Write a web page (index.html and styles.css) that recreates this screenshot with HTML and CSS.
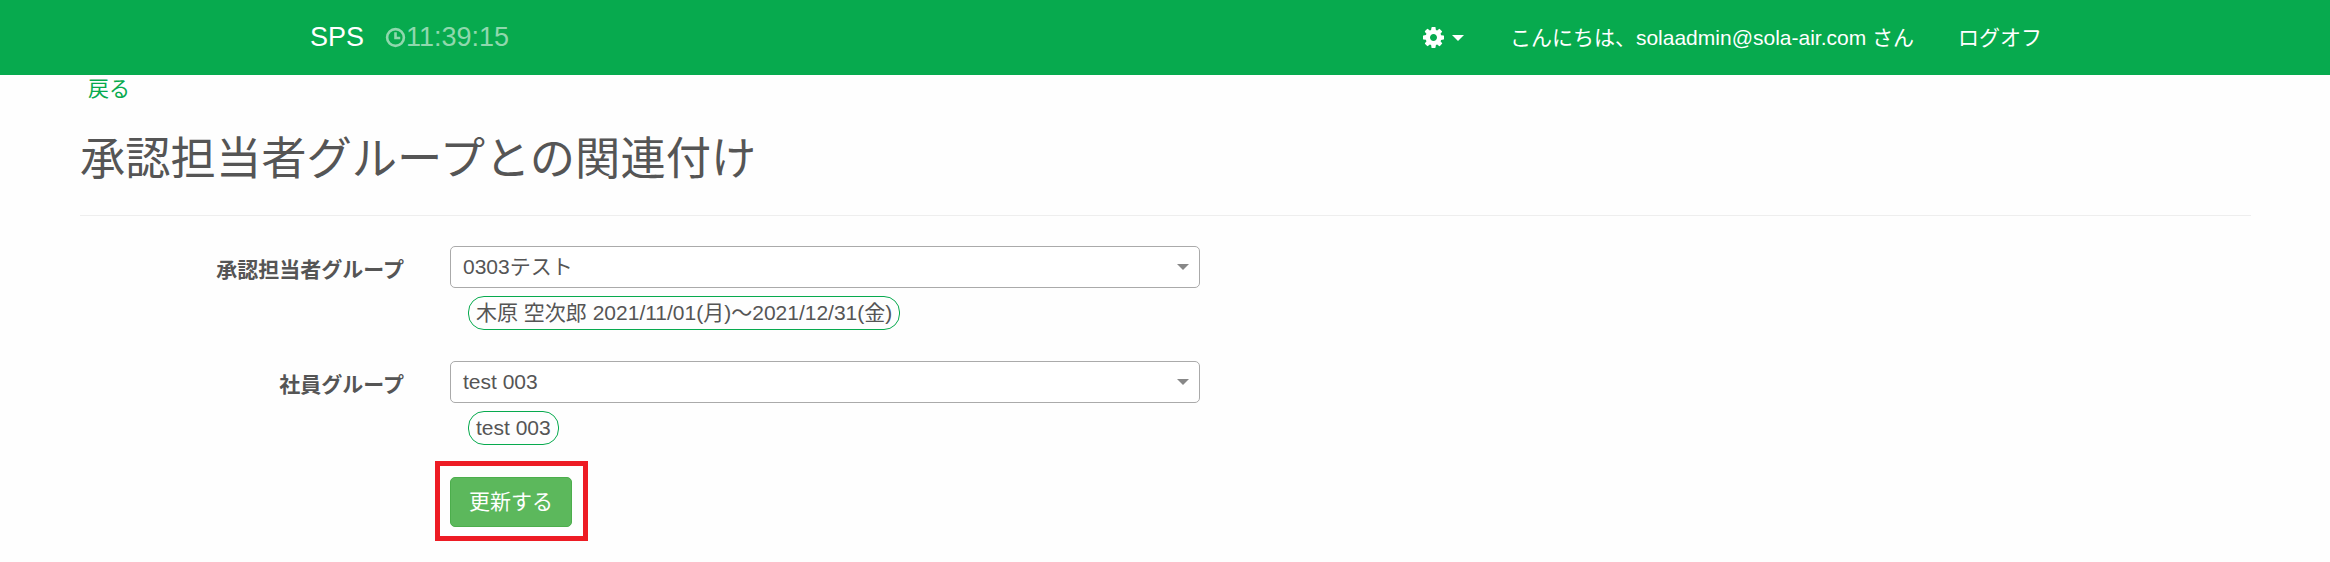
FILE: index.html
```html
<!DOCTYPE html>
<html lang="ja">
<head>
    <meta charset="UTF-8">
    <title>承認担当者グループとの関連付け</title>
    <link rel="stylesheet" href="styles.css">
</head>
<body>

    <!-- ナビゲーション -->
    <nav class="navbar">
        <a class="brand" href="#">SPS</a>
        <span class="clock">
            <svg class="clock-icon" viewBox="0 0 16 16">
                <circle cx="8" cy="8" r="6.4"></circle>
                <path d="M8 4v4.4h3.6"></path>
            </svg>11:39:15
        </span>
        <div class="nav-right">
            <a class="nav-item settings" href="#">
                <svg class="gear" viewBox="128 128 1536 1536">
                    <path d="M1152 896q0-106-75-181t-181-75-181 75-75 181 75 181 181 75 181-75 75-181zm512-109v222q0 12-8 23t-20 13l-185 28q-19 54-39 91 35 50 107 138 10 12 10 25t-9 23q-27 37-99 108t-94 71q-12 0-26-9l-138-108q-44 23-91 38-16 136-29 186-7 28-36 28h-222q-14 0-24.5-8.5t-11.5-21.5l-28-184q-49-16-90-37l-141 107q-10 9-25 9-14 0-25-11-126-114-165-168-7-10-7-23 0-12 8-23 15-21 51-66.5t54-70.5q-27-50-41-99l-183-27q-13-2-21-12.5t-8-23.5v-222q0-12 8-23t19-13l186-28q14-46 39-92-40-57-107-138-10-12-10-24 0-10 9-23 26-36 98.5-107.5t94.5-71.5q13 0 26 10l138 107q44-23 91-38 16-136 29-186 7-28 36-28h222q14 0 24.5 8.5t11.5 21.5l28 184q49 16 90 37l142-107q9-9 24-9 13 0 25 10 129 119 165 170 7 8 7 22 0 12-8 23-15 21-51 66.5t-54 70.5q26 50 41 98l183 28q13 2 21 12.5t8 23.5z"></path>
                </svg>
                <span class="caret"></span>
            </a>
            <a class="nav-item" href="#">こんにちは、solaadmin@sola-air.com さん</a>
            <a class="nav-item" href="#">ログオフ</a>
        </div>
    </nav>

    <!-- 本文 -->
    <main class="content">
        <a class="back-link" href="#">戻る</a>
        <h1>承認担当者グループとの関連付け</h1>
        <hr>

        <div class="form-row">
            <label class="form-label">承認担当者グループ</label>
            <div class="form-field">
                <div class="select-box">0303テスト<span class="select-arrow"></span></div>
                <div class="pill-row"><span class="pill">木原 空次郎 2021/11/01(月)～2021/12/31(金)</span></div>
            </div>
        </div>

        <div class="form-row">
            <label class="form-label">社員グループ</label>
            <div class="form-field">
                <div class="select-box">test 003<span class="select-arrow"></span></div>
                <div class="pill-row"><span class="pill">test 003</span></div>
            </div>
        </div>

        <div class="form-row">
            <div class="form-label"></div>
            <div class="form-field">
                <span class="button-wrap">
                    <button class="btn-update">更新する</button>
                    <span class="highlight-frame"></span>
                </span>
            </div>
        </div>
    </main>

</body>
</html>
```

FILE: styles.css
```css
body {
    margin: 0;
    min-height: 100vh;
    font-family: "Liberation Sans", "Noto Sans CJK JP", sans-serif;
    font-size: 21px;
    line-height: 25px;
    color: #555;
    background-color: #fefefe;
}

a {
    text-decoration: none;
}

.navbar {
    display: flex;
    align-items: center;
    height: 75px;
    padding: 0 288px 0 310px;
    background-color: #07aa4e;
    color: #fff;
}

.brand {
    color: #fff;
    font-size: 27px;
}

.clock {
    display: flex;
    align-items: center;
    margin-left: 21px;
    font-size: 27px;
    color: #8fd8ad;
}

.clock-icon {
    width: 21px;
    height: 21px;
    fill: none;
    stroke: #8fd8ad;
    stroke-width: 2;
}

.nav-right {
    display: flex;
    align-items: center;
    gap: 44px;
    margin-left: auto;
}

.nav-item {
    display: flex;
    align-items: center;
    color: #fff;
}

.settings {
    gap: 8px;
    margin-right: 2px;
}

.gear {
    width: 21px;
    height: 21px;
    fill: #fff;
}

.caret {
    width: 0;
    height: 0;
    border-top: 6px solid #fff;
    border-left: 6px solid transparent;
    border-right: 6px solid transparent;
}

.content {
    padding: 0 79px 42px 80px;
}

.back-link {
    display: block;
    margin-left: 8px;
    padding-top: 1px;
    color: #07aa4e;
}

h1 {
    margin: 28px 0 0;
    font-size: 45.3px;
    font-weight: 400;
    line-height: 62px;
    color: #555;
}

hr {
    margin: 24px 0 30px;
    border: none;
    border-top: 1px solid #eee;
}

.form-row {
    display: flex;
}

.form-label {
    width: 324px;
    margin-right: 46px;
    padding-top: 11px;
    flex-shrink: 0;
    text-align: right;
    font-weight: 700;
}

.form-field {
    width: 750px;
}

.select-box {
    position: relative;
    box-sizing: border-box;
    height: 42px;
    padding: 0 12px;
    line-height: 40px;
    background-color: #fff;
    border: 1px solid #aaa;
    border-radius: 5px;
}

.select-arrow {
    position: absolute;
    top: 17px;
    right: 10px;
    width: 0;
    height: 0;
    border-top: 6px solid #888;
    border-left: 6px solid transparent;
    border-right: 6px solid transparent;
}

.pill-row {
    display: flex;
    margin: 8px 0 31px 18px;
}

.pill {
    padding: 3px 7px;
    line-height: 25px;
    height: 26px;
    border: 1px solid #07aa4e;
    border-radius: 16px;
}

.button-wrap {
    position: relative;
    display: inline-block;
}

.btn-update {
    display: block;
    width: 122px;
    height: 50px;
    margin-top: 1px;
    padding: 0 0 4px;
    font-family: inherit;
    font-size: 21px;
    color: #fff;
    background-color: #5cb85c;
    border: 1px solid #4cae4c;
    border-radius: 5px;
}

/* 赤枠の注釈 */
.highlight-frame {
    position: absolute;
    top: -15px;
    left: -15px;
    right: -16px;
    bottom: -14px;
    border: 5px solid #ed1c24;
}
```
